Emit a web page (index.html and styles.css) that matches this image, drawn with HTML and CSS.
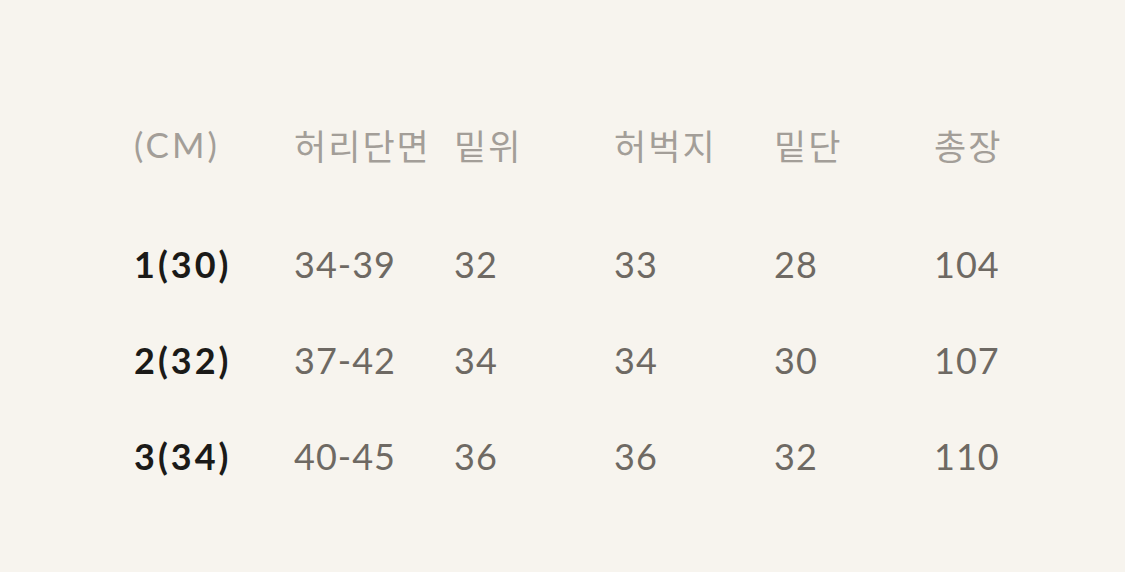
FILE: index.html
```html
<!DOCTYPE html>
<html lang="ko">
<head>
<meta charset="utf-8">
<link rel="stylesheet" href="styles.css">
</head>
<body>
<div class="size-table">
  <div class="row head">
    <div class="cell unit">(CM)</div>
    <div class="cell">허리단면</div>
    <div class="cell">밑위</div>
    <div class="cell">허벅지</div>
    <div class="cell">밑단</div>
    <div class="cell">총장</div>
  </div>
  <div class="row">
    <div class="cell size">1(30)</div>
    <div class="cell">34-39</div>
    <div class="cell">32</div>
    <div class="cell">33</div>
    <div class="cell">28</div>
    <div class="cell">104</div>
  </div>
  <div class="row">
    <div class="cell size">2(32)</div>
    <div class="cell">37-42</div>
    <div class="cell">34</div>
    <div class="cell">34</div>
    <div class="cell">30</div>
    <div class="cell">107</div>
  </div>
  <div class="row">
    <div class="cell size">3(34)</div>
    <div class="cell">40-45</div>
    <div class="cell">36</div>
    <div class="cell">36</div>
    <div class="cell">32</div>
    <div class="cell">110</div>
  </div>
</div>
</body>
</html>
```
FILE: styles.css
```css
html, body {
  margin: 0;
  padding: 0;
  background: #f7f4ee;
}
body {
  width: 1125px;
  height: 572px;
  overflow: hidden;
  font-family: "Lato", "Noto Sans CJK KR", sans-serif;
}
.size-table {
  padding: 96px 0 0 134px;
}
.row {
  display: grid;
  grid-template-columns: repeat(6, 160px);
  height: 96px;
  align-items: center;
  font-size: 36px;
  letter-spacing: 1px;
  color: #6e6963;
}
.head {
  margin-bottom: 24px;
  color: #a39e98;
  font-family: "Noto Sans CJK KR", "Lato", sans-serif;
  font-size: 35px;
  letter-spacing: 2px;
}
.head .unit {
  font-family: "Lato", sans-serif;
  font-size: 35px;
  letter-spacing: 3px;
}
.cell {
  white-space: nowrap;
}
.size {
  color: #1b1a18;
  font-weight: 700;
  letter-spacing: 3px;
}
```
